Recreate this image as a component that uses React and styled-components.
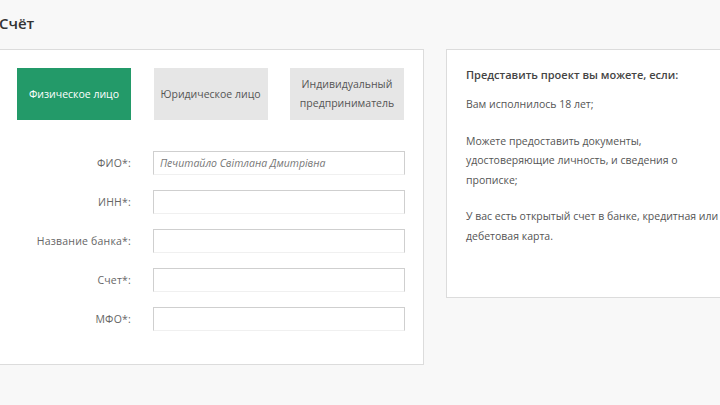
import React from "react";
import styled, { createGlobalStyle } from "styled-components";

const Global = createGlobalStyle`
  html, body { margin: 0; padding: 0; background: #f8f8f8; overflow: hidden; }
  body { font-family: "Open Sans", "Noto Sans", sans-serif; width: 720px; height: 405px; }
`;

const Page = styled.div`
  display: flex;
  flex-direction: column;
  margin-left: -1px;
`;

const Header = styled.div`
  height: 49px;
  display: flex;
  align-items: center;
`;

const Title = styled.h1`
  margin: 0 0 4px 0;
  font-size: 15px;
  font-weight: 600;
  color: #333;
`;

const Columns = styled.div`
  display: flex;
  align-items: flex-start;
  gap: 22px;
`;

const Panel = styled.div`
  background: #fff;
  border: 1px solid #dcdcdc;
  box-sizing: border-box;
`;

const FormPanel = styled(Panel)`
  width: 425px;
  padding: 18px 18px 33px 17px;
`;

const InfoPanel = styled(Panel)`
  width: 300px;
  height: 249px;
  padding: 15px 19px;
`;

const Tabs = styled.div`
  display: flex;
  gap: 22.5px;
  margin-bottom: 31px;
`;

const Tab = styled.button`
  width: 114px;
  height: 52px;
  border: none;
  padding: 0 4px;
  font-family: inherit;
  font-size: 10.5px;
  line-height: 19px;
  background: ${(p) => (p.$active ? "#239a69" : "#e6e6e6")};
  color: ${(p) => (p.$active ? "#fff" : "#555")};
`;

const Form = styled.div`
  display: grid;
  grid-template-columns: 114px 252px;
  column-gap: 22px;
  row-gap: 15px;
  align-items: center;
`;

const Label = styled.label`
  text-align: right;
  font-size: 10.5px;
  color: #666;
  letter-spacing: 0.2px;
`;

const Input = styled.input`
  height: 24px;
  box-sizing: border-box;
  border: 1px solid #cfcfcf;
  border-bottom-color: #f0f0f0;
  padding: 0 6px;
  font-family: inherit;
  font-size: 10.5px;
  font-style: italic;
  color: #777;
  outline: none;
`;

const InfoTitle = styled.p`
  margin: 0 0 11px 0;
  font-size: 11px;
  line-height: 19px;
  font-weight: 600;
  color: #444;
`;

const InfoText = styled.p`
  margin: 0 0 17px 0;
  font-size: 10.5px;
  line-height: 19.5px;
  color: #555;
  white-space: nowrap;
`;

const fields = [
  ["ФИО*:", "Печитайло Світлана Дмитрівна"],
  ["ИНН*:", ""],
  ["Название банка*:", ""],
  ["Счет*:", ""],
  ["МФО*:", ""],
];

export default function App() {
  return (
    <>
      <Global />
      <Page>
        <Header>
          <Title>Счёт</Title>
        </Header>
        <Columns>
          <FormPanel>
            <Tabs>
              <Tab $active>Физическое лицо</Tab>
              <Tab>Юридическое лицо</Tab>
              <Tab>Индивидуальный предприниматель</Tab>
            </Tabs>
            <Form>
              {fields.map(([l, v]) => (
                <React.Fragment key={l}>
                  <Label>{l}</Label>
                  <Input defaultValue={v} />
                </React.Fragment>
              ))}
            </Form>
          </FormPanel>
          <InfoPanel>
            <InfoTitle>Представить проект вы можете, если:</InfoTitle>
            <InfoText>Вам исполнилось 18 лет;</InfoText>
            <InfoText>
              Можете предоставить документы,
              <br />
              удостоверяющие личность, и сведения о
              <br />
              прописке;
            </InfoText>
            <InfoText>
              У вас есть открытый счет в банке, кредитная или
              <br />
              дебетовая карта.
            </InfoText>
          </InfoPanel>
        </Columns>
      </Page>
    </>
  );
}
